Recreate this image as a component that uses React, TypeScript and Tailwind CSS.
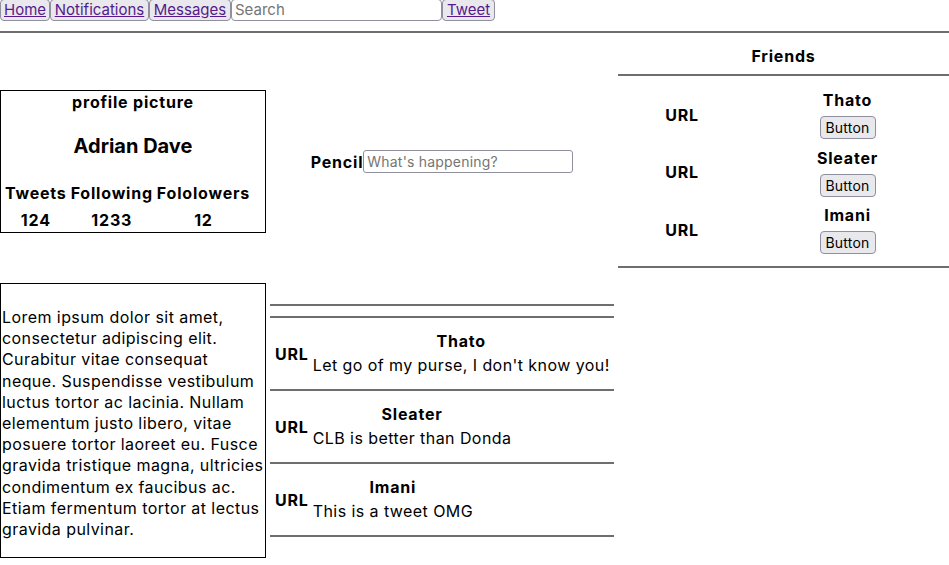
import { FC } from "react";

const friends = ["Thato", "Sleater", "Imani"];

const tweets = [
  { name: "Thato", text: "Let go of my purse, I don't know you!" },
  { name: "Sleater", text: "CLB is better than Donda" },
  { name: "Imani", text: "This is a tweet OMG" },
];

const NavButton: FC<{ label: string; w: string }> = ({ label, w }) => (
  <button className={`${w} h-[22px] -mt-[1px] bg-[#e9e9ed] border border-[#8f8f9d] rounded-[4px] text-[15px] leading-[18px] tracking-normal flex items-center justify-center`}>
    <a href="#" className="text-[#551a8b] underline">
      {label}
    </a>
  </button>
);

export default function App() {
  return (
    <div className="w-[949px] h-[565px] bg-white text-black font-['Inter',sans-serif] text-[16px] tracking-[0.43px] overflow-hidden">
      {/* nav */}
      <nav className="flex h-[21px]">
        <NavButton label="Home" w="w-[50px]" />
        <NavButton label="Notifications" w="w-[99px]" />
        <NavButton label="Messages" w="w-[82px]" />
        <input
          placeholder="Search"
          className="w-[211px] h-[22px] -mt-[1px] border border-[#8f8f9d] rounded-[4px] px-[3px] text-[15px] tracking-normal placeholder:text-[#757575] outline-none"
        />
        <NavButton label="Tweet" w="w-[53px]" />
      </nav>
      <div className="mt-[10px] border-t-2 border-[#6e6e6e]" />

      <div className="flex">
        {/* left column */}
        <div className="w-[266px] shrink-0">
          <div className="mt-[57px] h-[143px] border border-black">
            <h3 className="text-center font-bold tracking-[0.8px] leading-[20px] mt-[1px]">profile picture</h3>
            <h2 className="text-center font-bold text-[20px] tracking-normal leading-[24px] mt-[22px]">Adrian Dave</h2>
            <table className="mt-[20px] ml-[1px] border-separate border-spacing-[2px] font-bold tracking-[0.8px]">
              <tbody>
                <tr className="h-[26px]">
                  <th className="px-[1px]">Tweets</th>
                  <th className="px-[1px]">Following</th>
                  <th className="px-[1px]">Fololowers</th>
                </tr>
                <tr className="h-[24px]">
                  <td className="text-center">124</td>
                  <td className="text-center">1233</td>
                  <td className="text-center">12</td>
                </tr>
              </tbody>
            </table>
          </div>
          <div className="mt-[50px] h-[275px] border border-black pt-[23px] px-[1px]">
            <p className="leading-[21.2px]">
              Lorem ipsum dolor sit amet, consectetur adipiscing elit. Curabitur vitae consequat neque.
              Suspendisse vestibulum luctus tortor ac lacinia. Nullam elementum justo libero, vitae posuere
              tortor laoreet eu. Fusce gravida tristique magna, ultricies condimentum ex faucibus ac. Etiam
              fermentum tortor at lectus gravida pulvinar.
            </p>
          </div>
        </div>

        {/* middle column */}
        <div className="ml-[4px] w-[344px] shrink-0">
          <div className="mt-[117px] h-[23px] flex items-center justify-center">
            <span className="font-bold tracking-[0.8px]">Pencil</span>
            <input
              placeholder="What's happening?"
              className="w-[210px] h-[23px] border border-[#8f8f9d] rounded-[3px] px-[3px] text-[14px] tracking-[0.2px] placeholder:text-[#757575] outline-none"
            />
          </div>
          <div className="mt-[131px] border-t-2 border-[#6e6e6e]" />
          <div className="mt-[10px] border-t-2 border-[#6e6e6e]">
            {tweets.map((t) => (
              <div key={t.name} className="h-[73px] border-b-2 border-[#6e6e6e] flex items-center pl-[5px]">
                <span className="font-bold tracking-[0.8px]">URL</span>
                <div className="ml-[4px] -mt-[1px]">
                  <div className="text-center font-bold tracking-[0.8px] leading-[24px]">{t.name}</div>
                  <div className="leading-[24px]">{t.text}</div>
                </div>
              </div>
            ))}
          </div>
        </div>

        {/* right column */}
        <div className="ml-[4px] flex-1">
          <h3 className="mt-[11px] text-center font-bold tracking-[0.8px] leading-[24px]">Friends</h3>
          <div className="mt-[6px] border-t-2 border-[#6e6e6e]" />
          <div className="mt-[14px] flex flex-col gap-[8.5px]">
            {friends.map((f) => (
              <div key={f} className="flex items-center h-[49px]">
                <div className="w-[128px] text-center font-bold tracking-[0.8px]">URL</div>
                <div className="flex-1 flex flex-col items-center">
                  <span className="font-bold tracking-[0.8px] leading-[20px]">{f}</span>
                  <button className="mt-[6px] h-[23px] px-[5px] bg-[#e9e9ed] border border-[#8f8f9d] rounded-[4px] text-[14px] tracking-[0.2px]">
                    Button
                  </button>
                </div>
              </div>
            ))}
          </div>
          <div className="mt-[12px] border-t-2 border-[#6e6e6e]" />
        </div>
      </div>
    </div>
  );
}
